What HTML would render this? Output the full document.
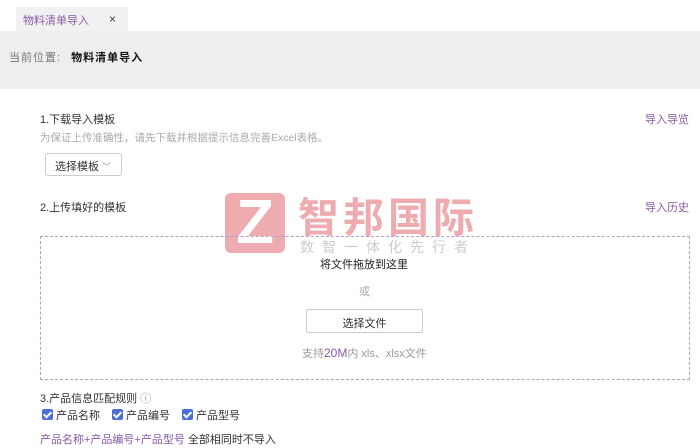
<!DOCTYPE html>
<html><head><meta charset="utf-8"><style>
*{margin:0;padding:0;box-sizing:border-box}
body{width:700px;height:448px;overflow:hidden;background:#fff;font-family:"Liberation Sans","Noto Sans CJK SC",sans-serif;font-size:11px;color:#333;position:relative}
.a{position:absolute;white-space:nowrap}
.p{color:#8a5aa8}
.cb{display:inline-block;width:11px;height:11px;background:#4a6fd8;border-radius:2px;vertical-align:-1px;margin-right:3px;position:relative}
.cb:after{content:"";position:absolute;left:3px;top:1px;width:3px;height:6px;border:solid #fff;border-width:0 2px 2px 0;transform:rotate(45deg)}
</style></head><body>
<div class="a" style="left:16px;top:7px;width:112px;height:24px;background:#f1f1f1"></div>
<div class="a p" style="left:23px;top:12px;font-size:11px">物料清单导入</div>
<div class="a" style="left:109px;top:12px;font-size:12px;color:#444">×</div>
<div class="a" style="left:0;top:31px;width:700px;height:58px;background:#eeeeee"></div>
<div class="a" style="left:9px;top:49px;color:#777;letter-spacing:1px">当前位置: <b style="color:#111;margin-left:6px">物料清单导入</b></div>
<div class="a" style="left:40px;top:111px">1.下载导入模板</div>
<div class="a p" style="left:645px;top:111px">导入导览</div>
<div class="a" style="left:40px;top:130px;color:#aaa;font-size:10.5px">为保证上传准确性，请先下载并根据提示信息完善Excel表格。</div>
<div class="a" style="left:45px;top:153px;width:77px;height:23px;border:1px solid #ccc;border-radius:3px;padding:4px 0 0 9px">选择模板 <span style="color:#999;font-size:9px">﹀</span></div>
<div class="a" style="left:225px;top:193px;width:60px;height:60px;background:#eeacb0;border-radius:6px;color:#fff;font-size:62px;font-weight:bold;line-height:60px;text-align:center">Z</div>
<div class="a" style="left:298px;top:184px;font-size:41px;color:#eeacb0;font-weight:bold;letter-spacing:4px">智邦国际</div>
<div class="a" style="left:300px;top:237px;font-size:14px;color:#ccc;letter-spacing:8px">数智一体化先行者</div>
<div class="a" style="left:40px;top:199px">2.上传填好的模板</div>
<div class="a p" style="left:645px;top:199px">导入历史</div>
<div class="a" style="left:40px;top:236px;width:650px;height:144px;border:1px dashed #b99ac8"></div>
<div class="a" style="left:320px;top:256px;color:#222;font-size:11px">将文件拖放到这里</div>
<div class="a" style="left:359px;top:283px;color:#aaa;font-size:11px">或</div>
<div class="a" style="left:306px;top:309px;width:117px;height:24px;border:1px solid #ccc;border-radius:2px;text-align:center;padding-top:5px;font-size:11px">选择文件</div>
<div class="a" style="left:302px;top:345px;color:#999;font-size:11px">支持<span class="p" style="font-size:12px">20M</span>内 xls、xlsx文件</div>
<div class="a" style="left:40px;top:390px">3.产品信息匹配规则 <span style="color:#999">ⓘ</span></div>
<div class="a" style="left:42px;top:407px"><span class="cb"></span>产品名称<span style="display:inline-block;width:12px"></span><span class="cb"></span>产品编号<span style="display:inline-block;width:12px"></span><span class="cb"></span>产品型号</div>
<div class="a" style="left:40px;top:431px"><span class="p">产品名称+产品编号+产品型号</span> 全部相同时不导入</div>
</body></html>
